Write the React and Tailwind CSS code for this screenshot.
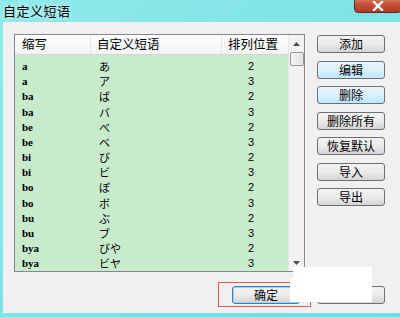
import React from 'react';

const rows = [
  ['a', 'あ', '2'],
  ['a', 'ア', '3'],
  ['ba', 'ば', '2'],
  ['ba', 'バ', '3'],
  ['be', 'べ', '2'],
  ['be', 'ベ', '3'],
  ['bi', 'び', '2'],
  ['bi', 'ビ', '3'],
  ['bo', 'ぼ', '2'],
  ['bo', 'ボ', '3'],
  ['bu', 'ぶ', '2'],
  ['bu', 'ブ', '3'],
  ['bya', 'びや', '2'],
  ['bya', 'ビヤ', '3'],
];

const cjk = { fontFamily: '"Noto Sans CJK SC", "Noto Sans", sans-serif' };
const jp = { fontFamily: '"Noto Sans CJK JP", sans-serif' };

function Btn({ children, blue }) {
  return (
    <button
      className={
        'h-[18px] w-[68px] rounded-[3px] border border-[#707070] text-[12px] leading-none text-black ' +
        (blue
          ? 'bg-gradient-to-b from-[#eaf6fd] via-[#d9f0fc] to-[#bee6fd]'
          : 'bg-gradient-to-b from-[#f2f2f2] via-[#ebebeb] to-[#d4d4d4]')
      }
      style={cjk}
    >
      {children}
    </button>
  );
}

export default function App() {
  return (
    <div className="relative w-[400px] h-[317px] overflow-hidden bg-gradient-to-br from-[#8fe9ea] via-[#7ee3e6] to-[#6fdde2]" style={cjk}>
      {/* title bar */}
      <div className="h-[22px] flex items-center pl-[3px] relative">
        <span className="text-[13px] text-black tracking-[0.5px] [text-shadow:0_0_6px_#ffffff]">自定义短语</span>
        <div className="absolute right-[-2px] top-[-6px] w-[48px] h-[19px] rounded-b-[4px] border border-[#5a2a20] bg-gradient-to-b from-[#e8a08c] via-[#c8523a] to-[#b03a25] flex items-center justify-center">
          <svg width="12" height="10" viewBox="0 0 12 10" className="mt-[4px]">
            <path d="M2 1 L10 9 M10 1 L2 9" stroke="#ffffff" strokeWidth="2.4" strokeLinecap="square" />
          </svg>
        </div>
      </div>

      {/* client */}
      <div className="ml-[3px] h-[291px] bg-[#f0f0f0] flex flex-col">
        <div className="flex pt-[12px] pl-[11px]">
          {/* list */}
          <div className="w-[291px] h-[238px] border border-[#828790] bg-[#c8ebcc] flex">
            <div className="flex-1 flex flex-col overflow-hidden">
              <div className="h-[21px] flex items-center bg-gradient-to-b from-white to-[#f3f3f3] border-b border-[#d5d5d5] text-[12.5px] text-black">
                <div className="w-[76px] pl-[7px] border-r border-[#e3e3e3] h-full flex items-center">缩写</div>
                <div className="w-[131px] pl-[6px] border-r border-[#e3e3e3] h-full flex items-center">自定义短语</div>
                <div className="flex-1 pl-[6px] h-full flex items-center">排列位置</div>
              </div>
              <div className="pt-[3px]">
                {rows.map((r, i) => (
                  <div key={i} className="h-[15.2px] flex items-center text-black overflow-hidden">
                    <div className="w-[76px] pl-[7px] text-[11px] leading-[14px] font-bold" style={{ fontFamily: '"Liberation Serif", serif' }}>{r[0]}</div>
                    <div className="w-[131px] pl-[8px] text-[11px] leading-[14px]" style={jp}>{r[1]}</div>
                    <div className="pl-[26px] text-[11px] leading-[14px]" style={{ fontFamily: '"Liberation Sans", sans-serif' }}>{r[2]}</div>
                  </div>
                ))}
              </div>
            </div>
            {/* scrollbar */}
            <div className="w-[16px] h-full bg-[#f2f2f2] border-l border-[#e6e6e6] flex flex-col items-center">
              <div className="h-[17px] flex items-center justify-center">
                <svg width="7" height="4" viewBox="0 0 7 4"><path d="M0 4 L3.5 0 L7 4 Z" fill="#4d4d4d" /></svg>
              </div>
              <div className="w-[14px] h-[14px] rounded-[2px] border border-[#979797] bg-gradient-to-r from-[#f3f3f3] to-[#e2e2e2]" />
              <div className="flex-1" />
              <div className="h-[17px] flex items-center justify-center">
                <svg width="7" height="4" viewBox="0 0 7 4"><path d="M0 0 L3.5 4 L7 0 Z" fill="#4d4d4d" /></svg>
              </div>
            </div>
          </div>

          {/* buttons */}
          <div className="ml-[12px] pt-[1px] flex flex-col gap-[7.5px]">
            <Btn>添加</Btn>
            <Btn blue>编辑</Btn>
            <Btn blue>删除</Btn>
            <Btn>删除所有</Btn>
            <Btn>恢复默认</Btn>
            <Btn>导入</Btn>
            <Btn>导出</Btn>
          </div>
        </div>

        {/* bottom buttons */}
        <div className="flex pl-[229px] pt-[14px] gap-[17px]">
          <button className="h-[18px] w-[68px] rounded-[3px] border border-[#3c7fb1] bg-gradient-to-b from-[#f2f2f2] via-[#ebebeb] to-[#d4d4d4] text-[12px] leading-none text-black shadow-[inset_0_0_0_1px_#9fd3f0]" style={cjk}>
            确定
          </button>
          <button className="h-[18px] w-[68px] rounded-[3px] border border-[#707070] bg-gradient-to-b from-[#f2f2f2] via-[#ebebeb] to-[#d4d4d4] text-[12px] leading-none text-black" style={cjk}>
            取消
          </button>
        </div>
      </div>

      {/* annotation overlays */}
      <div className="absolute left-[218px] top-[282px] w-[93px] h-[25px] border border-[#e05a5a]" />
      <div className="absolute left-[293px] top-[267px] w-[79px] h-[35px] bg-white" />
      <div className="absolute left-[290px] top-[278px] w-[3px] h-[24px] bg-white" />
    </div>
  );
}
